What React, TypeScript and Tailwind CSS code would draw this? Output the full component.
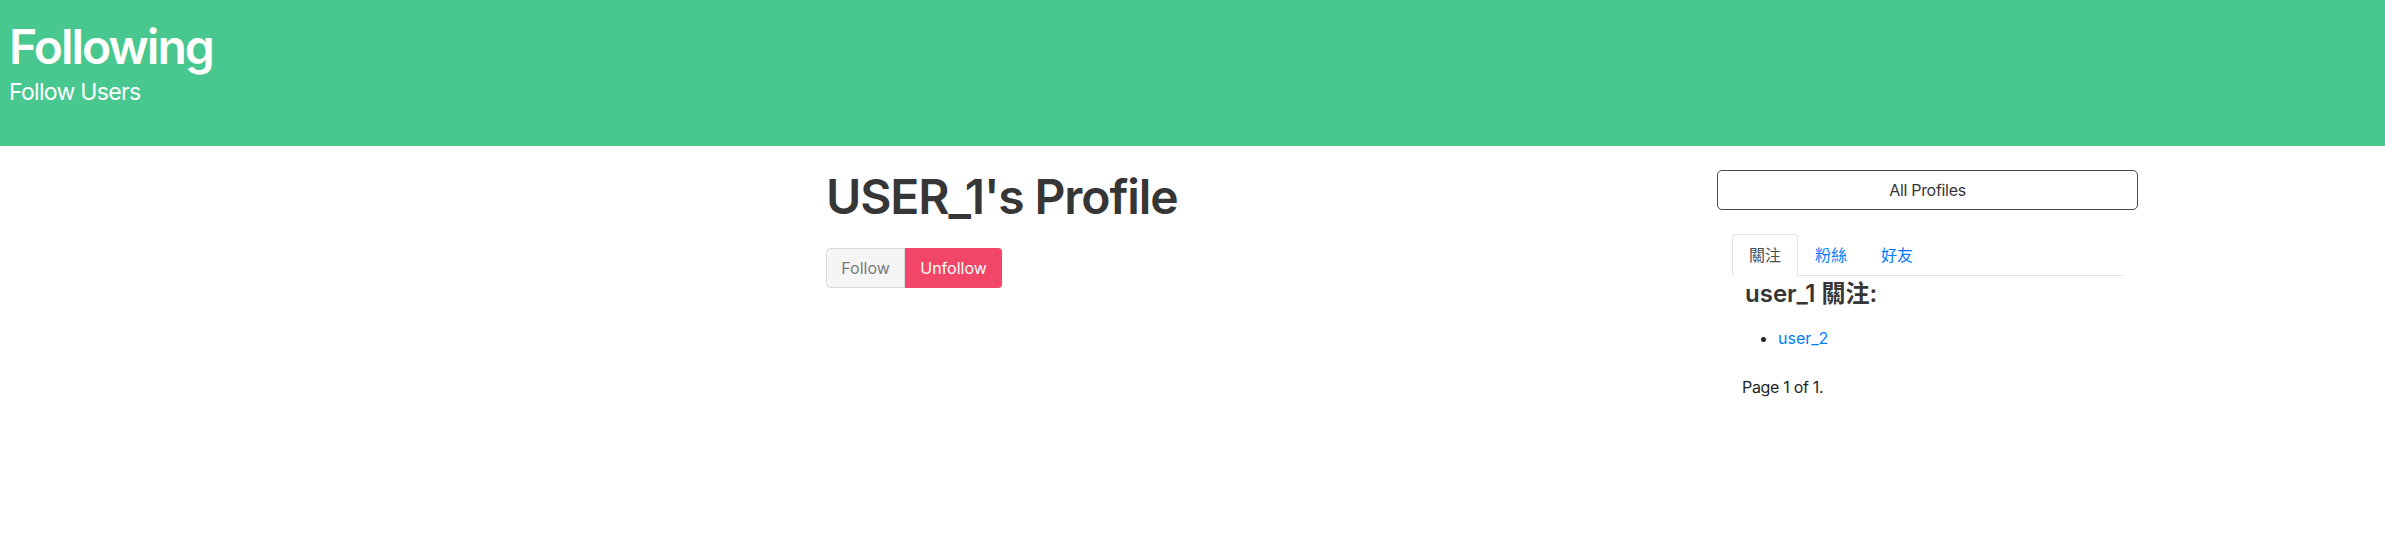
import React from "react";

export default function App() {
  const font = {
    fontFamily:
      'Inter, "Noto Sans CJK TC", "Noto Sans", sans-serif',
  } as React.CSSProperties;
  return (
    <div className="w-[2385px] h-[552px] bg-white text-[#363636]" style={font}>
      <header className="h-[146px] bg-[#48c78e] px-[9px] pt-[23px] text-white">
        <h1 className="text-[48px] leading-[48px] font-semibold tracking-[-2px]">Following</h1>
        <p className="mt-[10px] text-[23px] leading-[23px] tracking-[-0.7px]">Follow Users</p>
      </header>
      <div className="flex pt-6">
        <div className="ml-[826px] w-[891px]">
          <h2 className="text-[48px] leading-[54px] font-semibold tracking-[-1.1px] text-[#363636]">
            USER_1's Profile
          </h2>
          <div className="mt-6 flex">
            <button className="h-10 w-[79px] rounded-l-[4px] border border-[#dbdbdb] bg-[#f5f5f5] text-[16px] text-[#7a7a7a]">
              Follow
            </button>
            <button className="h-10 w-[97px] rounded-r-[4px] border border-transparent bg-[#f14668] text-[16px] text-white">
              Unfollow
            </button>
          </div>
        </div>
        <div className="w-[421px]">
          <button className="h-10 w-full rounded-[5px] border border-[#4a4a4a] bg-white text-[16px] tracking-[-0.3px] text-[#363636]">
            All Profiles
          </button>
          <ul className="mx-[15px] mt-6 flex border-b border-[#dee2e6] text-[16px] leading-6">
            <li className="-mb-px rounded-t-[4px] border border-[#dee2e6] border-b-white bg-white px-4 py-2 text-[#495057]">
              關注
            </li>
            <li className="-mb-px border border-transparent px-4 py-2 text-[#007bff]">
              粉絲
            </li>
            <li className="-mb-px border border-transparent px-4 py-2 text-[#007bff]">
              好友
            </li>
          </ul>
          <div className="pl-[25px]">
            <h3 className="pl-[3px] pt-[3px] text-[24px] leading-[29px] font-semibold text-[#363636]">
              user_1 關注:
            </h3>
            <ul className="mt-[18px] list-disc pl-[36px] text-[16px] leading-6 marker:text-[#212529]">
              <li className="text-[#007bff]">
                <span>user_2</span>
              </li>
            </ul>
            <p className="mt-[25px] text-[16px] leading-6 tracking-[-0.3px] text-[#212529]">Page 1 of 1.</p>
          </div>
        </div>
      </div>
    </div>
  );
}
